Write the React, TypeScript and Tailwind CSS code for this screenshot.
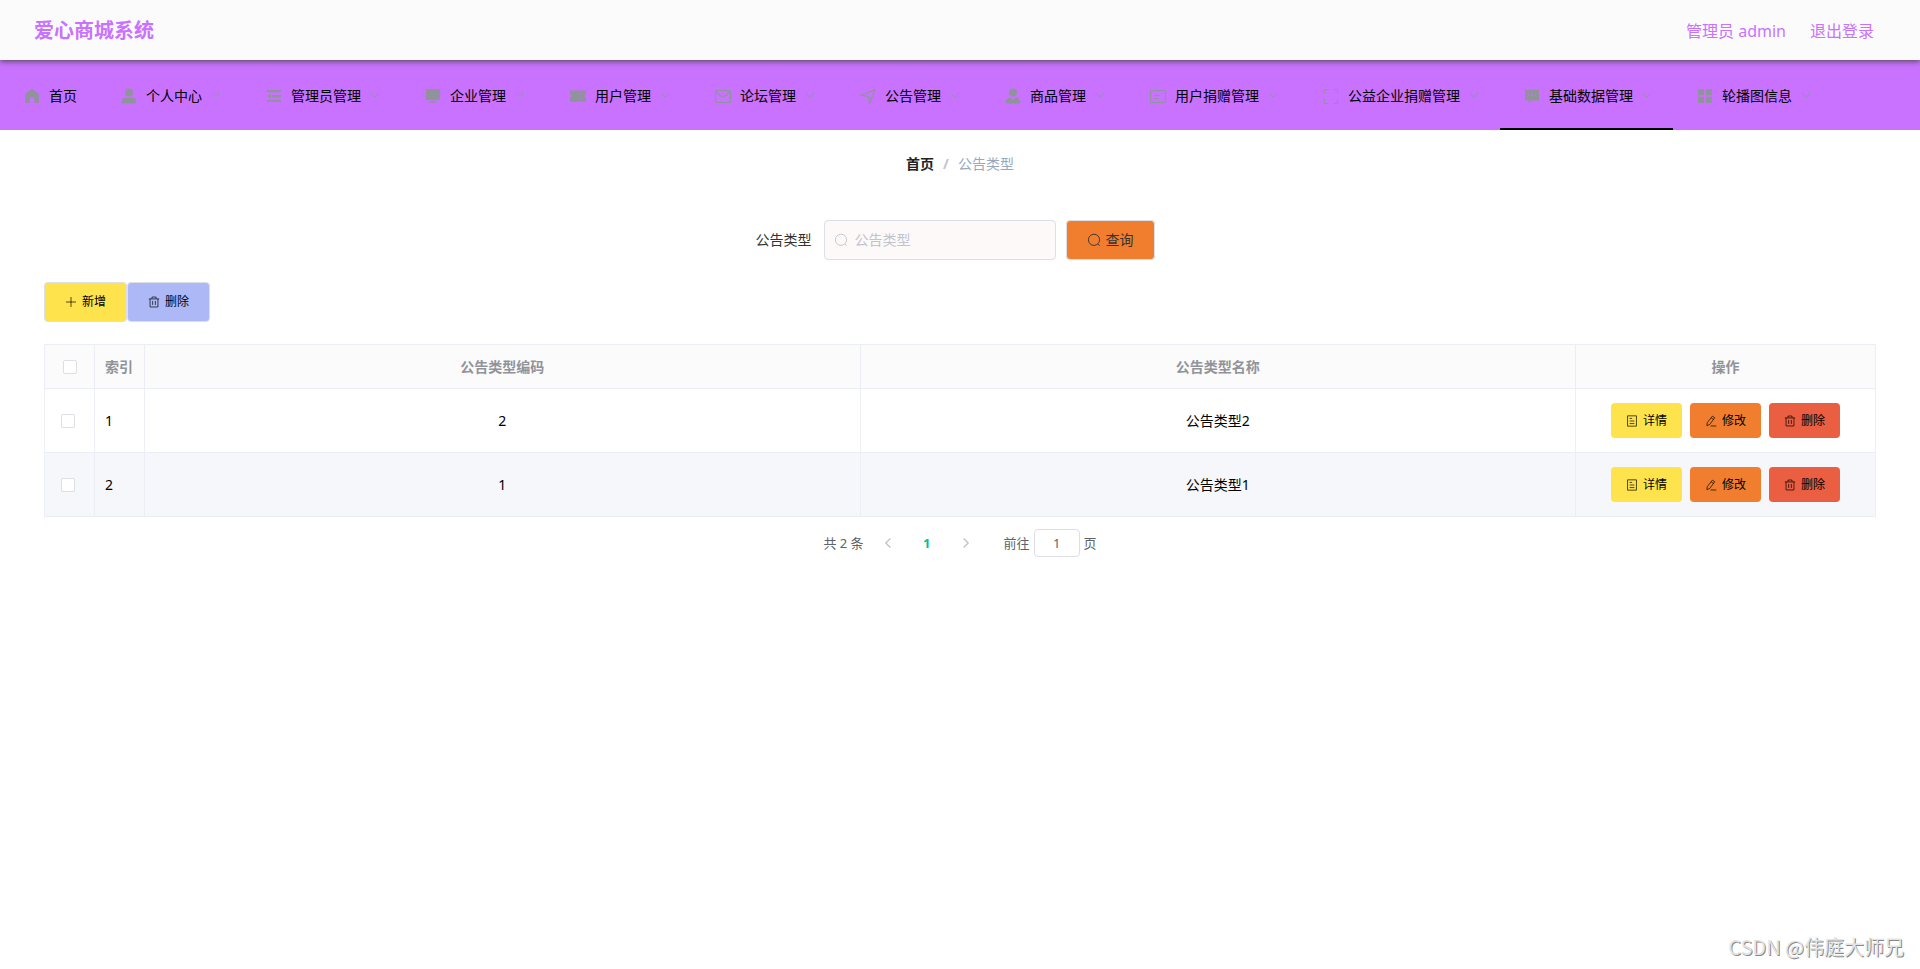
import React, { useState } from 'react';

interface NavItem {
  label: string;
  icon: React.ReactNode;
  hasChildren?: boolean;
}

interface NoticeType {
  id: number;
  code: string;
  name: string;
}

interface IconProps {
  className?: string;
  children: React.ReactNode;
}

/* 18px icons used in the menu */
const MenuIcon: React.FC<IconProps> = ({ children }) => (
  <svg viewBox="0 0 18 18" className="w-[18px] h-[18px]" fill="currentColor" aria-hidden="true">
    {children}
  </svg>
);

/* Thin outlined icons used in buttons and inputs */
const LineIcon: React.FC<IconProps> = ({ className, children }) => (
  <svg viewBox="0 0 14 14" className={className} fill="none" stroke="currentColor" aria-hidden="true">
    {children}
  </svg>
);

const SearchIcon = () => (
  <LineIcon className="w-[14px] h-[14px]">
    <circle cx="7" cy="6.8" r="5.6" strokeWidth="0.9" />
    <path d="M10.8 10.8 12.6 12.8" strokeWidth="0.9" />
  </LineIcon>
);

const PlusIcon = () => (
  <LineIcon className="w-3 h-3">
    <path d="M7 1.2v11.6M1.2 7h11.6" strokeWidth="0.8" />
  </LineIcon>
);

const DeleteIcon = () => (
  <LineIcon className="w-3 h-3">
    <path d="M1 3.4h12M4.6 3.2V1.2h4.8v2M2.4 3.4v9.4h9.2V3.4M5.4 5.8v4.6M8.6 5.8v4.6" strokeWidth="0.8" />
  </LineIcon>
);

const DetailIcon = () => (
  <LineIcon className="w-3 h-3">
    <path d="M1.8 1h10.4v12H1.8zM4.2 4h3M4.2 7h5.6M4.2 10h5.6" strokeWidth="0.8" />
  </LineIcon>
);

const EditIcon = () => (
  <LineIcon className="w-3 h-3">
    <path d="M8.6 1.4 11.4 3.2 5.6 11 2.2 12.4 2.6 9zM7.2 3.4 10 5.2M6.4 12.8h6.8" strokeWidth="0.8" />
  </LineIcon>
);

const ArrowDown = () => (
  <svg viewBox="0 0 12 12" className="w-3 h-3 ml-2" fill="none" stroke="currentColor" strokeWidth="0.9" aria-hidden="true">
    <path d="M2 3 6 7 10 3" />
  </svg>
);

const navItems: NavItem[] = [
  {
    label: '首页',
    icon: <path d="M9 1.8 15.8 7v9h-4.5v-5.4H6.7V16H2.2V7z" />,
  },
  {
    label: '个人中心',
    hasChildren: true,
    icon: (
      <>
        <circle cx="9" cy="5.6" r="4" />
        <path d="M1.8 16.6v-2.4c0-2.2 1.4-3.4 3.4-3.4h7.6c2 0 3.4 1.2 3.4 3.4v2.4z" />
      </>
    ),
  },
  {
    label: '管理员管理',
    hasChildren: true,
    icon: <path d="M2 3h14v2.2H2zM7.4 8H16v2.2H7.4zM2 12.8h14V15H2zM2 9.1l4-2.3v4.6z" />,
  },
  {
    label: '企业管理',
    hasChildren: true,
    icon: <path d="M2.6 2h12.8c.4 0 .7.3.7.7v10.2H1.9V2.7c0-.4.3-.7.7-.7zM7.2 13.8h3.6l1.8 1.2v.8H4.6V15z" />,
  },
  {
    label: '用户管理',
    hasChildren: true,
    icon: (
      <path
        fillRule="evenodd"
        d="M1 3.4h10.2l.7 1.2.7-1.2H17v3.8a1.9 1.9 0 0 0 0 3.7v3.9h-4.4l-.7-1.2-.7 1.2H1v-3.9a1.9 1.9 0 0 0 0-3.7zM11.4 5.8v2h1v-2zM11.4 10.2v2h1v-2z"
      />
    ),
  },
  {
    label: '论坛管理',
    hasChildren: true,
    icon: (
      <g fill="none" stroke="currentColor" strokeWidth="1.2">
        <rect x="1.5" y="3.5" width="15" height="12" rx="1" />
        <path d="M2.4 4.2c1.6 2.6 4 5.4 6.6 5.4s5-2.8 6.6-5.4" />
      </g>
    ),
  },
  {
    label: '公告管理',
    hasChildren: true,
    icon: <path d="M16 2.6 1.8 8.4l7.8 1.1.9 7z" fill="none" stroke="currentColor" strokeWidth="1.2" />,
  },
  {
    label: '商品管理',
    hasChildren: true,
    icon: (
      <>
        <circle cx="9" cy="5.6" r="4" />
        <path d="M1.4 16.6c.2-3.6 1.8-5.8 4.8-6.4L9 13l2.8-2.8c3 .6 4.6 2.8 4.8 6.4z" />
      </>
    ),
  },
  {
    label: '用户捐赠管理',
    hasChildren: true,
    icon: (
      <g fill="none" stroke="currentColor" strokeWidth="1.2">
        <rect x="1.5" y="3.5" width="15" height="12" rx="1" />
        <path d="M4.8 8.5h6M4.8 11.5h5M12 6.5h1.6" />
      </g>
    ),
  },
  {
    label: '公益企业捐赠管理',
    hasChildren: true,
    icon: (
      <path
        d="M2.5 6.5v-4h4M11.5 2.5h4v4M15.5 12v4.5h-4M6.5 16.5h-4V12"
        fill="none"
        stroke="currentColor"
        strokeWidth="1.2"
      />
    ),
  },
  {
    label: '基础数据管理',
    hasChildren: true,
    icon: (
      <path
        fillRule="evenodd"
        d="M2 2.4h14v11.2H8.4L5.8 16.4v-2.8H2zM4.8 7.2v1.6h1.6V7.2zM8.2 7.2v1.6h1.6V7.2zM11.6 7.2v1.6h1.6V7.2z"
      />
    ),
  },
  {
    label: '轮播图信息',
    hasChildren: true,
    icon: (
      <>
        <rect x="2" y="2" width="6.2" height="6.2" rx="1" />
        <rect x="9.8" y="2" width="6.2" height="6.2" rx="1" />
        <rect x="2" y="9.8" width="6.2" height="6.2" rx="1" />
        <rect x="9.8" y="9.8" width="6.2" height="6.2" rx="1" />
      </>
    ),
  },
];

const noticeTypes: NoticeType[] = [
  { id: 1, code: '2', name: '公告类型2' },
  { id: 2, code: '1', name: '公告类型1' },
];

const checkboxClass =
  'block appearance-none w-[14px] h-[14px] rounded-xs border border-[#dcdfe6] bg-white checked:bg-[#c972ff] cursor-pointer';
const cellClass = 'border-r border-b border-[#ebeef5]';
const rowButtonClass =
  'flex items-center gap-[5px] h-[35px] px-[15px] rounded text-xs text-black cursor-pointer hover:opacity-80';

const App: React.FC = () => {
  const [active, setActive] = useState('基础数据管理');
  const [keyword, setKeyword] = useState('');
  const [page, setPage] = useState('1');
  const [selected, setSelected] = useState<number[]>([]);

  const toggleRow = (id: number) => {
    setSelected(prev => (prev.includes(id) ? prev.filter(x => x !== id) : [...prev, id]));
  };

  const allSelected = selected.length === noticeTypes.length;

  return (
    <div className="relative min-h-screen bg-white text-sm text-black font-['Noto_Sans','Noto_Sans_CJK_SC',sans-serif]">
      {/* Header */}
      <header className="relative z-10 flex items-center justify-between h-[60px] pt-[2px] pl-[34px] pr-[46px] bg-[#fbfbfb] text-[#c972ff] shadow-[0_1px_6px_#444]">
        <h1 className="text-xl font-bold">爱心商城系统</h1>
        <div className="flex items-center gap-6 text-base">
          <span>管理员 admin</span>
          <a href="#logout">退出登录</a>
        </div>
      </header>

      {/* Menu */}
      <nav className="flex h-[70px] bg-[#c972ff]">
        {navItems.map(item => (
          <a
            key={item.label}
            href={`#${item.label}`}
            onClick={() => setActive(item.label)}
            className={`flex items-center shrink-0 px-5 pt-1 border-b-2 text-[#909399] ${
              active === item.label ? 'border-black' : 'border-transparent'
            }`}
          >
            <span className="flex justify-center w-6 mr-[5px]">
              <MenuIcon>{item.icon}</MenuIcon>
            </span>
            <span className="text-black">{item.label}</span>
            {item.hasChildren && <ArrowDown />}
          </a>
        ))}
      </nav>

      <main className="px-[44px] pt-6">
        {/* Breadcrumb */}
        <div className="flex justify-center">
          <a href="#home" className="font-bold text-[#222]">首页</a>
          <span className="mx-[9px] font-bold text-[#c0c4cc]">/</span>
          <span className="text-[#97a8be]">公告类型</span>
        </div>

        {/* Search */}
        <form className="flex items-center justify-center mt-[46px] pr-[10px]" onSubmit={e => e.preventDefault()}>
          <label htmlFor="keyword" className="pr-3 text-[#333]">公告类型</label>
          <div className="flex items-center gap-[7px] w-[232px] h-10 mr-[10px] pl-[9px] rounded border border-[#dcdfe6] bg-[#fdf9f9] text-[#c0c4cc]">
            <SearchIcon />
            <input
              id="keyword"
              type="text"
              value={keyword}
              onChange={e => setKeyword(e.target.value)}
              placeholder="公告类型"
              className="flex-1 min-w-0 outline-none text-[#606266] placeholder:text-[#c0c4cc]"
            />
          </div>
          <button
            type="submit"
            className="flex items-center gap-[5px] h-10 px-5 rounded border border-[#dcdfe6] bg-[#f17e2f] text-[#333] cursor-pointer"
          >
            <SearchIcon />
            查询
          </button>
        </form>

        {/* Toolbar */}
        <div className="flex mt-[22px] text-xs">
          <button
            type="button"
            className="flex items-center gap-[5px] h-10 px-5 rounded border border-[#dcdfe6] bg-[#fee34c] cursor-pointer"
          >
            <PlusIcon />
            新增
          </button>
          <button
            type="button"
            className="flex items-center gap-[5px] h-10 px-5 rounded border border-[#dcdfe6] bg-[#adb8f7] cursor-pointer"
          >
            <DeleteIcon />
            删除
          </button>
        </div>

        {/* Table */}
        <table className="w-full mt-[22px] table-fixed border-separate border-spacing-0 border-l border-t border-[#ebeef5]">
          <colgroup>
            <col className="w-[50px]" />
            <col className="w-[50px]" />
            <col />
            <col />
            <col className="w-[300px]" />
          </colgroup>
          <thead>
            <tr className="h-11 bg-[#fbfbfb] text-[#909399]">
              <th className={`${cellClass} pl-[18px]`}>
                <input
                  type="checkbox"
                  aria-label="全选"
                  checked={allSelected}
                  onChange={() => setSelected(allSelected ? [] : noticeTypes.map(n => n.id))}
                  className={checkboxClass}
                />
              </th>
              <th className={`${cellClass} pl-[10px] text-left`}>索引</th>
              <th className={cellClass}>公告类型编码</th>
              <th className={cellClass}>公告类型名称</th>
              <th className={cellClass}>操作</th>
            </tr>
          </thead>
          <tbody>
            {noticeTypes.map((row, index) => (
              <tr key={row.id} className="h-16 even:bg-[#f5f7fa]">
                <td className={`${cellClass} pl-4`}>
                  <input
                    type="checkbox"
                    aria-label={row.name}
                    checked={selected.includes(row.id)}
                    onChange={() => toggleRow(row.id)}
                    className={checkboxClass}
                  />
                </td>
                <td className={`${cellClass} pl-[10px]`}>{index + 1}</td>
                <td className={`${cellClass} text-center`}>{row.code}</td>
                <td className={`${cellClass} text-center`}>{row.name}</td>
                <td className={cellClass}>
                  <div className="flex justify-center gap-2">
                    <button type="button" className={`${rowButtonClass} bg-[#fee34c]`}>
                      <DetailIcon />
                      详情
                    </button>
                    <button type="button" className={`${rowButtonClass} bg-[#f17e2f]`}>
                      <EditIcon />
                      修改
                    </button>
                    <button type="button" className={`${rowButtonClass} bg-[#ea5e41]`}>
                      <DeleteIcon />
                      删除
                    </button>
                  </div>
                </td>
              </tr>
            ))}
          </tbody>
        </table>

        {/* Pagination */}
        <div className="flex items-center justify-center h-7 mt-3 text-[13px] text-[#606266]">
          <span className="mr-[10px]">共 {noticeTypes.length} 条</span>
          <button type="button" aria-label="上一页" disabled className="flex justify-center w-7 text-[#c0c4cc]">
            <svg viewBox="0 0 12 12" className="w-3 h-3" fill="none" stroke="currentColor" strokeWidth="1.4">
              <path d="M8.4 1.4 3.8 6l4.6 4.6" />
            </svg>
          </button>
          <button type="button" className="w-[50px] font-bold text-[#00c292] cursor-pointer">1</button>
          <button type="button" aria-label="下一页" disabled className="flex justify-center w-7 text-[#c0c4cc]">
            <svg viewBox="0 0 12 12" className="w-3 h-3" fill="none" stroke="currentColor" strokeWidth="1.4">
              <path d="M3.6 1.4 8.2 6l-4.6 4.6" />
            </svg>
          </button>
          <label htmlFor="page" className="ml-6">前往</label>
          <input
            id="page"
            type="text"
            value={page}
            onChange={e => setPage(e.target.value)}
            className="w-[46px] h-7 mx-1 rounded border border-[#dcdfe6] text-center outline-none"
          />
          <span>页</span>
        </div>
      </main>

      <div className="absolute right-4 bottom-2 text-xl text-[#e4e4e4] [text-shadow:1px_1px_0_#888] font-['Noto_Sans_CJK_SC',sans-serif]">
        CSDN @伟庭大师兄
      </div>
    </div>
  );
};

export default App;
